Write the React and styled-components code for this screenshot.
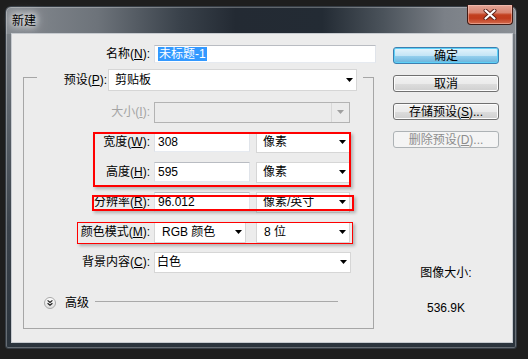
import React from "react";
import styled, { createGlobalStyle } from "styled-components";

const Global = createGlobalStyle`
  html, body { margin: 0; padding: 0; background: #1e1e1e; }
  body { width: 528px; height: 359px; overflow: hidden; font-family: "Liberation Sans", "Noto Sans CJK SC", sans-serif; font-size: 12px; color: #000; }
  #root { padding: 6px 0 0 5px; }
`;

const Window = styled.div`
  box-sizing: border-box;
  width: 512px;
  height: 343px;
  border: 1px solid #353c44;
  border-radius: 6px 6px 3px 3px;
  padding: 0 3px 5px 5px;
  display: flex;
  flex-direction: column;
  background:
    linear-gradient(90deg, #868b91 0%, #6d737a 18%, #3a424b 34%, #232a33 45%, #232b34 62%, #4b535b 74%, #7b8087 86%, #8a8f95 100%) top / 100% 27px no-repeat,
    linear-gradient(180deg, #80858b 0%, #5d646c 30%, #3a424b 65%, #2b343d 100%);
  box-shadow: inset 0 0 0 1px rgba(255, 255, 255, 0.28);
`;

const TitleBar = styled.div`
  height: 26px;
  display: flex;
  align-items: flex-start;
  justify-content: space-between;
`;

const Title = styled.div`
  margin: 6px 0 0 1px;
  font-family: "Noto Sans CJK SC", sans-serif;
  font-size: 12px;
  line-height: 14px;
  color: #000;
  text-shadow: 0 0 6px #fff, 0 0 10px rgba(255, 255, 255, 0.9), 0 0 14px rgba(255, 255, 255, 0.7);
`;

const CloseButton = styled.div`
  box-sizing: border-box;
  width: 46px;
  height: 20px;
  margin: -2px 0 0 0;
  border: 1px solid #3f1a14;
  border-top: none;
  border-radius: 0 0 4px 4px;
  display: flex;
  align-items: center;
  justify-content: center;
  background: linear-gradient(180deg, #e4a697 0%, #d98672 40%, #c2401f 52%, #c13c1d 70%, #d36c4f 100%);
  box-shadow: inset 0 0 0 1px rgba(255, 210, 200, 0.45);
`;

const Client = styled.div`
  flex: 1;
  position: relative;
  display: flex;
  background: #ececec;
  border: 1px solid #c6cacf;
  padding-left: 11px;
`;

const LeftColumn = styled.div`
  width: 354px;
  padding-top: 11px;
  display: flex;
  flex-direction: column;
`;

const RightColumn = styled.div`
  width: 106px;
  margin-left: 16px;
  padding-top: 13px;
  display: flex;
  flex-direction: column;
  gap: 11px;
`;

const Row = styled.div`
  display: flex;
  align-items: center;
  height: ${(p) => p.$h || 22}px;
  margin-top: ${(p) => p.$mt || 0}px;
`;

const Label = styled.div`
  width: ${(p) => p.$w}px;
  text-align: right;
  white-space: nowrap;
  margin-right: ${(p) => p.$gap ?? 4}px;
  color: ${(p) => (p.$disabled ? "#a4a4a4" : "#000")};
  line-height: 14px;
`;

const TextBox = styled.div`
  box-sizing: border-box;
  width: ${(p) => p.$w}px;
  height: ${(p) => p.$h || 20}px;
  background: #fff;
  border: 1px solid;
  border-color: #b9bcc2 #e0e4ea #e6eaf0 #dcdfe5;
  padding-left: 3px;
  display: flex;
  align-items: center;
  line-height: 14px;
`;

const Selected = styled.span`
  background: #3399ff;
  color: #fff;
  padding: 0 1px;
  line-height: 14px;
`;

const SelectBox = styled.div`
  box-sizing: border-box;
  width: ${(p) => p.$w}px;
  height: ${(p) => p.$h || 21}px;
  margin-left: ${(p) => p.$ml || 0}px;
  background: ${(p) => (p.$disabled ? "#ebebeb" : "#fff")};
  border: 1px solid ${(p) => (p.$disabled ? "#b3b3b3" : "#d6d6d6")};
  padding-left: ${(p) => p.$pl ?? 6}px;
  display: flex;
  align-items: center;
  justify-content: space-between;
  line-height: 14px;
`;

const ArrowArea = styled.div`
  align-self: stretch;
  width: ${(p) => (p.$disabled ? 17 : 14)}px;
  display: flex;
  align-items: center;
  justify-content: center;
  border-left: ${(p) => (p.$disabled ? "1px solid #d8d8d8" : "none")};
`;

const GroupBox = styled.fieldset`
  box-sizing: border-box;
  width: 351px;
  margin: 0;
  padding: 0 0 17px 0;
  min-width: 0;
  border: 1px solid #a6a6a6;
`;

const Legend = styled.legend`
  margin-left: 13px;
  padding: 6px 6px 0 0;
  display: flex;
  align-items: center;
`;

const Rows = styled.div`
  padding-top: 10px;
  display: flex;
  flex-direction: column;
  gap: 8px;
`;

const AdvancedRow = styled.div`
  display: flex;
  align-items: center;
  height: 16px;
  margin-top: 22px;
  padding-left: 20px;
`;

const AdvancedText = styled.span`
  margin-left: 9px;
  line-height: 14px;
`;

const Separator = styled.div`
  width: 243px;
  height: 1px;
  margin-left: 6px;
  margin-top: -3px;
  background: #a9a9a9;
`;

const Button = styled.div`
  box-sizing: border-box;
  height: 17px;
  width: 106px;
  border: 1px solid ${(p) => (p.$primary ? "#3c7fb1" : p.$disabled ? "#adb2b5" : "#707070")};
  border-radius: 3px;
  display: flex;
  align-items: center;
  justify-content: center;
  line-height: 14px;
  color: ${(p) => (p.$disabled ? "#8d8d8d" : "#000")};
  background: ${(p) =>
    p.$primary
      ? "linear-gradient(180deg, #e5f4fc 0%, #c4e5f6 50%, #98d1ef 51%, #68b3db 100%)"
      : p.$disabled
      ? "#f4f4f4"
      : "linear-gradient(180deg, #f2f2f2 0%, #ebebeb 50%, #dddddd 51%, #cfcfcf 100%)"};
  box-shadow: ${(p) => (p.$primary ? "inset 0 0 0 1px #5ed1f7" : p.$disabled ? "none" : "inset 0 0 0 1px #fcfcfc")};
`;

const SizeInfo = styled.div`
  margin-top: 107px;
  text-align: center;
  line-height: 14px;
`;

const SizeValue = styled.div`
  margin-top: 10px;
  text-align: center;
  line-height: 14px;
`;

const Annotation = styled.div`
  position: absolute;
  box-sizing: border-box;
  left: ${(p) => p.$x}px;
  top: ${(p) => p.$y}px;
  width: ${(p) => p.$w}px;
  height: ${(p) => p.$h}px;
  border: ${(p) => p.$bw || 2}px solid #ff0000;
  box-shadow: 2px 2px 3px rgba(0, 0, 0, 0.25);
  pointer-events: none;
`;

const Arrow = ({ disabled }) => (
  <svg width="7" height="4" viewBox="0 0 7 4">
    <polygon points="0,0 7,0 3.5,4" fill={disabled ? "#a0a0a0" : "#000"} />
  </svg>
);

const Select = ({ w, h, ml, pl, disabled, children }) => (
  <SelectBox $w={w} $h={h} $ml={ml} $pl={pl} $disabled={disabled}>
    <span>{children}</span>
    <ArrowArea $disabled={disabled}>
      <Arrow disabled={disabled} />
    </ArrowArea>
  </SelectBox>
);

const U = styled.u`
  text-decoration: underline;
  text-underline-offset: 1px;
`;

const ExpandIcon = () => (
  <svg width="12" height="12" viewBox="0 0 12 12">
    <defs>
      <linearGradient id="eg" x1="0" y1="0" x2="0" y2="1">
        <stop offset="0" stopColor="#ffffff" />
        <stop offset="1" stopColor="#dcdcdc" />
      </linearGradient>
    </defs>
    <circle cx="6" cy="6" r="5.5" fill="url(#eg)" stroke="#a8a8a8" />
    <path d="M3.6 3.4 L6 5.4 L8.4 3.4 M3.6 6.2 L6 8.2 L8.4 6.2" fill="none" stroke="#222" strokeWidth="1.2" />
  </svg>
);

const CloseGlyph = () => (
  <svg width="14" height="11" viewBox="0 0 14 11">
    <path d="M2.5 1.5 L11.5 9.5 M11.5 1.5 L2.5 9.5" stroke="#5a2016" strokeWidth="4" strokeLinecap="round" />
    <path d="M2.5 1.5 L11.5 9.5 M11.5 1.5 L2.5 9.5" stroke="#ffffff" strokeWidth="2.2" strokeLinecap="round" />
  </svg>
);

export default function App() {
  return (
    <>
      <Global />
      <Window>
        <TitleBar>
          <Title>新建</Title>
          <CloseButton>
            <CloseGlyph />
          </CloseButton>
        </TitleBar>
        <Client>
          <LeftColumn>
            <Row $h={18}>
              <Label $w={127}>
                名称(<U>N</U>):
              </Label>
              <TextBox $w={222} $h={18}>
                <Selected>未标题-1</Selected>
              </TextBox>
            </Row>
            <GroupBox>
              <Legend>
                <Label $w={70} $gap={1}>
                  预设(<U>P</U>):
                </Label>
                <Select w={249} h={22} pl={6}>
                  剪贴板
                </Select>
              </Legend>
              <Rows>
                <Row>
                  <Label $w={126} $disabled>
                    大小(<U>I</U>):
                  </Label>
                  <Select w={196} disabled>
                    {""}
                  </Select>
                </Row>
                <Row>
                  <Label $w={126}>
                    宽度(<U>W</U>):
                  </Label>
                  <TextBox $w={96}>308</TextBox>
                  <Select w={94} ml={6}>
                    像素
                  </Select>
                </Row>
                <Row>
                  <Label $w={126}>
                    高度(<U>H</U>):
                  </Label>
                  <TextBox $w={96}>595</TextBox>
                  <Select w={94} ml={6}>
                    像素
                  </Select>
                </Row>
                <Row>
                  <Label $w={126}>
                    分辨率(<U>R</U>):
                  </Label>
                  <TextBox $w={96}>96.012</TextBox>
                  <Select w={94} ml={6}>
                    像素/英寸
                  </Select>
                </Row>
                <Row>
                  <Label $w={126}>
                    颜色模式(<U>M</U>):
                  </Label>
                  <Select w={92} pl={7}>
                    RGB 颜色
                  </Select>
                  <Select w={94} ml={10} pl={7}>
                    8 位
                  </Select>
                </Row>
                <Row>
                  <Label $w={126}>
                    背景内容(<U>C</U>):
                  </Label>
                  <Select w={197} pl={2}>
                    白色
                  </Select>
                </Row>
              </Rows>
              <AdvancedRow>
                <ExpandIcon />
                <AdvancedText>高级</AdvancedText>
                <Separator />
              </AdvancedRow>
            </GroupBox>
          </LeftColumn>
          <RightColumn>
            <Button $primary>确定</Button>
            <Button>取消</Button>
            <Button>
              存储预设(<U>S</U>)...
            </Button>
            <Button $disabled>
              删除预设(<U>D</U>)...
            </Button>
            <SizeInfo>图像大小:</SizeInfo>
            <SizeValue>536.9K</SizeValue>
          </RightColumn>
          <Annotation $x={81} $y={98} $w={258} $h={55} />
          <Annotation $x={80} $y={161} $w={262} $h={16} />
          <Annotation $x={65} $y={188} $w={276} $h={22} $bw={1.5} />
        </Client>
      </Window>
    </>
  );
}
